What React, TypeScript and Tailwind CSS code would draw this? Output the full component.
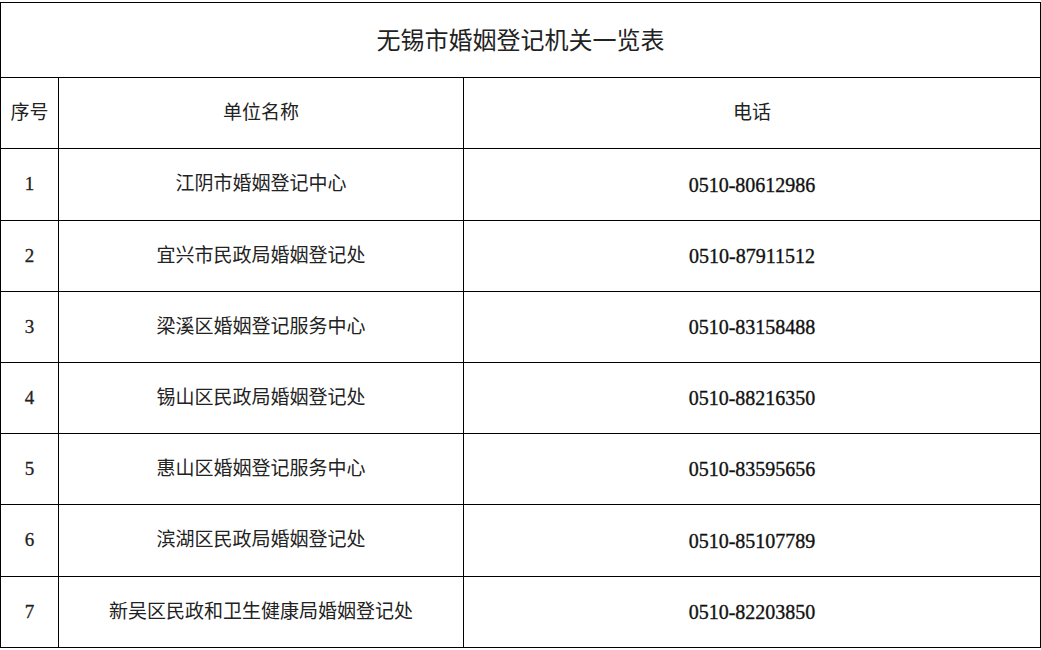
const rows = [
  { no: "1", name: "江阴市婚姻登记中心", tel: "0510-80612986", h: "h-[72px]" },
  { no: "2", name: "宜兴市民政局婚姻登记处", tel: "0510-87911512", h: "h-[71px]" },
  { no: "3", name: "梁溪区婚姻登记服务中心", tel: "0510-83158488", h: "h-[71px]" },
  { no: "4", name: "锡山区民政局婚姻登记处", tel: "0510-88216350", h: "h-[71px]" },
  { no: "5", name: "惠山区婚姻登记服务中心", tel: "0510-83595656", h: "h-[71px]" },
  { no: "6", name: "滨湖区民政局婚姻登记处", tel: "0510-85107789", h: "h-[72px]" },
  { no: "7", name: "新吴区民政和卫生健康局婚姻登记处", tel: "0510-82203850", h: "h-[71px]" },
];

const cjk = "font-['Liberation_Serif','Noto_Sans_CJK_SC',serif]";

export default function App() {
  return (
    <div className="bg-white w-[1041px] h-[650px] pt-[2px] text-[#222]">
      <table className={`border-collapse w-[1040px] table-fixed ${cjk}`}>
        <colgroup>
          <col className="w-[58px]" />
          <col className="w-[405px]" />
          <col className="w-[577px]" />
        </colgroup>
        <tbody>
          <tr className="h-[75px]">
            <td colSpan={3} className="border border-black text-center text-[24px] pt-[2px]">
              无锡市婚姻登记机关一览表
            </td>
          </tr>
          <tr className="h-[71px]">
            <td className="border border-black text-center text-[19px]">序号</td>
            <td className="border border-black text-center text-[19px]">单位名称</td>
            <td className="border border-black text-center text-[19px]">电话</td>
          </tr>
          {rows.map((r) => (
            <tr key={r.no} className={r.h}>
              <td className="border border-black text-center text-[19px] [-webkit-text-stroke:0.3px_#222]">{r.no}</td>
              <td className="border border-black text-center text-[19px]">{r.name}</td>
              <td className="border border-black text-center text-[20px] text-[#111] [-webkit-text-stroke:0.35px_#111]">{r.tel}</td>
            </tr>
          ))}
        </tbody>
      </table>
    </div>
  );
}
